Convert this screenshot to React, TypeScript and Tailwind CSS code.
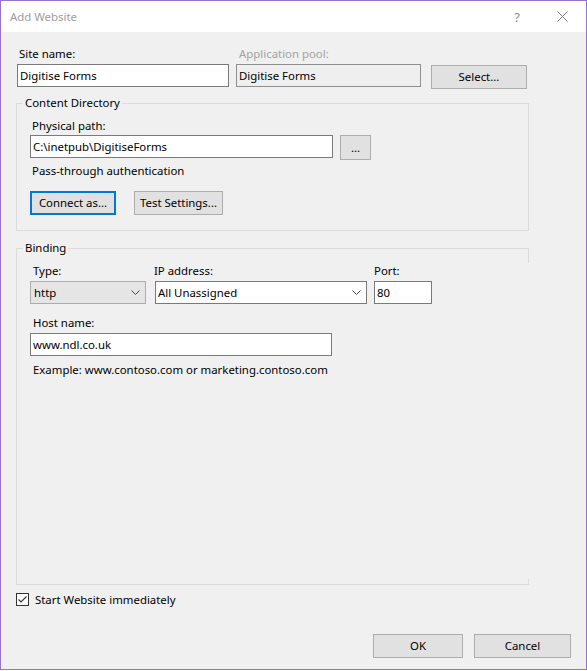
import React from 'react'

const font = { fontFamily: '"Noto Sans", "Liberation Sans", sans-serif' }

function Chevron() {
  return (
    <svg width="9" height="5" viewBox="0 0 9 5" className="shrink-0">
      <path d="M0.5 0.5 L4.5 4.5 L8.5 0.5" fill="none" stroke="#444" strokeWidth="1" />
    </svg>
  )
}

function Button({
  children,
  className = '',
  focused = false,
}: {
  children: React.ReactNode
  className?: string
  focused?: boolean
}) {
  return (
    <div
      className={
        'flex items-center justify-center h-[24px] bg-[#e1e1e1] text-black ' +
        (focused ? 'border-2 border-[#0078d7] ' : 'border border-[#adadad] ') +
        className
      }
    >
      {children}
    </div>
  )
}

function TextBox({ value, className = '' }: { value: string; className?: string }) {
  return (
    <div className={'flex items-center h-[23px] bg-white border border-[#7a7a7a] pl-[2px] text-black ' + className}>
      {value}
    </div>
  )
}

export default function App() {
  return (
    <div style={font} className="w-[587px] h-[670px] border border-[#9a72c8] bg-[#f0f0f0] flex flex-col text-[11.4px] leading-[16px] text-black select-none">
      {/* title bar */}
      <div className="h-[31px] bg-white flex items-center shrink-0">
        <span className="ml-[9px] text-[#9d9d9d]">Add Website</span>
        <span className="ml-auto text-[#8a8a8a] text-[13px]">?</span>
        <svg width="11" height="11" viewBox="0 0 11 11" className="ml-[37px] mr-[18px]">
          <path d="M0.5 0.5 L10.5 10.5 M10.5 0.5 L0.5 10.5" stroke="#7a7a7a" strokeWidth="1" />
        </svg>
      </div>

      <div className="flex flex-col px-[15px]">
        {/* site name row */}
        <div className="flex items-start mt-[14px] pl-[1px]">
          <div className="flex flex-col w-[212px]">
            <span className="ml-[2px]">Site name:</span>
            <TextBox value="Digitise Forms" className="mt-[2px]" />
          </div>
          <div className="flex flex-col w-[185px] ml-[7px]">
            <span className="ml-[3px] text-[#a3a3a3]">Application pool:</span>
            <div className="flex items-center h-[23px] mt-[2px] bg-[#efefef] border border-[#8f8f8f] pl-[2px]">
              Digitise Forms
            </div>
          </div>
          <Button className="w-[96px] ml-[10px] mt-[19px]">Select...</Button>
        </div>

        {/* content directory */}
        <fieldset className="w-[513px] mt-[6px] border border-[#dcdcdc]">
          <legend className="ml-[6px] px-[2px] leading-[16px]">Content Directory</legend>
          <div className="flex flex-col px-[13px] pb-[15px]">
            <div className="mt-[7px] ml-[2px]">Physical path:</div>
            <div className="flex items-start mt-[1px]">
              <TextBox value="C:\inetpub\DigitiseForms" className="w-[303px]" />
              <Button className="w-[31px] h-[25px] ml-[7px]">...</Button>
            </div>
            <div className="mt-[3px] ml-[2px]">Pass-through authentication</div>
            <div className="flex mt-[12px]">
              <Button focused className="w-[86px]">Connect as...</Button>
              <Button className="w-[89px] ml-[18px]">Test Settings...</Button>
            </div>
          </div>
        </fieldset>

        {/* binding */}
        <div className="relative mt-[9px] w-[513px]">
          <fieldset className="w-[513px] h-[345px] border border-[#dcdcdc] border-r-transparent">
            <legend className="ml-[6px] px-[2px] leading-[16px]">Binding</legend>
            <div className="flex flex-col px-[13px]">
              <div className="flex items-start mt-[7px]">
                <div className="flex flex-col w-[116px]">
                  <span className="ml-[3px]">Type:</span>
                  <div className="flex items-center justify-between h-[23px] mt-[2px] bg-[#e5e5e5] border border-[#adadad] pl-[3px] pr-[5px]">
                    <span>http</span>
                    <Chevron />
                  </div>
                </div>
                <div className="flex flex-col w-[212px] ml-[9px]">
                  <span className="-ml-[1px]">IP address:</span>
                  <div className="flex items-center justify-between h-[23px] mt-[2px] bg-white border border-[#7a7a7a] pl-[2px] pr-[5px]">
                    <span>All Unassigned</span>
                    <Chevron />
                  </div>
                </div>
                <div className="flex flex-col w-[58px] ml-[7px]">
                  <span>Port:</span>
                  <TextBox value="80" className="mt-[2px]" />
                </div>
              </div>
              <div className="mt-[11px] ml-[3px]">Host name:</div>
              <TextBox value="www.ndl.co.uk" className="w-[302px] mt-[2px]" />
              <div className="mt-[6px] ml-[3px]">Example: www.contoso.com or marketing.contoso.com</div>
            </div>
          </fieldset>
          <span className="absolute right-0 top-[8px] w-[1px] h-[15px] bg-[#dcdcdc]" />
          <span className="absolute right-0 top-[339px] w-[1px] h-[6px] bg-[#dcdcdc]" />
        </div>

        {/* start checkbox */}
        <div className="flex items-center h-[13px] mt-[8px]">
          <div className="w-[13px] h-[13px] border border-[#333] bg-white flex items-center justify-center">
            <svg width="11" height="11" viewBox="0 0 11 11">
              <path d="M1.5 5.5 L4 8 L9.5 2.5" fill="none" stroke="#333" strokeWidth="1.1" />
            </svg>
          </div>
          <span className="ml-[6px]">Start Website immediately</span>
        </div>

        {/* buttons */}
        <div className="flex justify-end mt-[28px]">
          <Button className="w-[90px]">OK</Button>
          <Button className="w-[97px] ml-[11px]">Cancel</Button>
        </div>
      </div>
    </div>
  )
}
